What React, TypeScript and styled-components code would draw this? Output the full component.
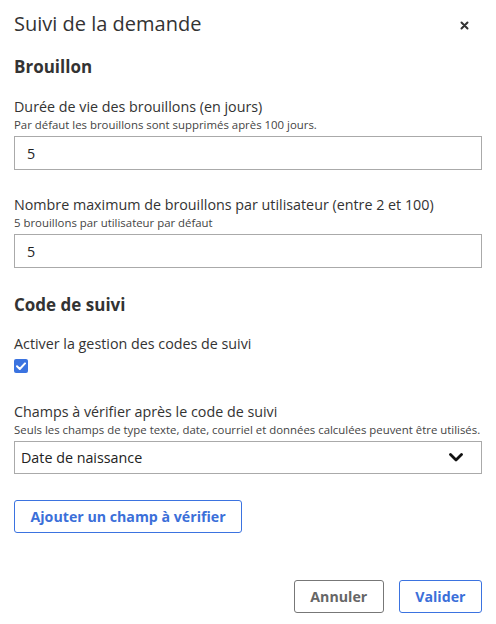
import styled, { createGlobalStyle } from "styled-components";

const GlobalStyle = createGlobalStyle`
  html, body {
    margin: 0;
    padding: 0;
    background: #ffffff;
  }
  body {
    font-family: "Open Sans", "Liberation Sans", sans-serif;
    color: #333333;
  }
  * {
    box-sizing: border-box;
  }
`;

const Dialog = styled.div`
  width: 496px;
  padding: 10px 14px 11px;
  display: flex;
  flex-direction: column;
`;

const Header = styled.div`
  display: flex;
  align-items: center;
  justify-content: space-between;
`;

const Title = styled.h2`
  margin: 0;
  font-size: 20px;
  line-height: 28px;
  font-weight: 400;
  color: #333333;
`;

const CloseButton = styled.button`
  border: none;
  background: none;
  padding: 0;
  margin: 2px 12px 0 0;
  width: 12px;
  height: 12px;
  display: flex;
  align-items: center;
  justify-content: center;
  cursor: pointer;
`;

const SectionTitle = styled.h3<{ $spaced?: boolean }>`
  margin: ${(p) => (p.$spaced ? "25px" : "17px")} 0 0;
  font-size: 17px;
  line-height: 24px;
  font-weight: 700;
  color: #333333;
`;

const Field = styled.div<{ $gap?: number }>`
  display: flex;
  flex-direction: column;
  margin-top: ${(p) => p.$gap ?? 25}px;
`;

const Label = styled.label`
  font-size: 14.3px;
  line-height: 20px;
  color: #333333;
`;

const Hint = styled.div`
  font-size: 11.4px;
  line-height: 15px;
  color: #444444;
`;

const TextInput = styled.input`
  width: 100%;
  height: 34px;
  margin-top: 4px;
  padding: 0 12px;
  border: 1px solid #aaaaaa;
  border-radius: 0;
  font-family: inherit;
  font-size: 14.3px;
  color: #222222;
  outline: none;
`;

const CheckboxBox = styled.span`
  margin: 5px 0 4px;
  width: 14px;
  height: 14px;
  border-radius: 2px;
  background: #3b73e0;
  display: flex;
  align-items: center;
  justify-content: center;
`;

const SelectBox = styled.div`
  height: 33px;
  margin-top: 4px;
  border: 1px solid #aaaaaa;
  padding: 0 18px 0 6px;
  display: flex;
  align-items: center;
  justify-content: space-between;
  font-size: 14.3px;
  color: #222222;
`;

const Button = styled.button<{ $tone?: "primary" | "muted" }>`
  height: 33px;
  padding: 0 15.5px;
  background: #ffffff;
  border: 1px solid ${(p) => (p.$tone === "muted" ? "#777777" : "#3b73e0")};
  border-radius: 3px;
  color: ${(p) => (p.$tone === "muted" ? "#666666" : "#3b6fd9")};
  font-family: inherit;
  font-size: 14.2px;
  font-weight: 700;
  cursor: pointer;
`;

const AddRow = styled.div`
  margin-top: 26px;
  display: flex;
`;

const Footer = styled.div`
  margin-top: 47px;
  display: flex;
  justify-content: flex-end;
  gap: 15px;
`;

const Check = () => (
  <svg width="10" height="8" viewBox="0 0 10 8">
    <path d="M1 4.2 L3.8 7 L9 1.4" fill="none" stroke="#fff" strokeWidth="2" strokeLinecap="round" strokeLinejoin="round" />
  </svg>
);

const Chevron = () => (
  <svg width="14" height="9" viewBox="0 0 14 9">
    <path d="M1.5 1.5 L7 7 L12.5 1.5" fill="none" stroke="#111" strokeWidth="2.8" strokeLinecap="round" strokeLinejoin="round" />
  </svg>
);

export default function App() {
  return (
    <>
      <GlobalStyle />
      <Dialog>
        <Header>
          <Title>Suivi de la demande</Title>
          <CloseButton aria-label="Fermer">
            <svg width="9" height="9" viewBox="0 0 9 9">
              <path d="M1.5 1.5 L7.5 7.5 M7.5 1.5 L1.5 7.5" stroke="#333" strokeWidth="2" strokeLinecap="round" />
            </svg>
          </CloseButton>
        </Header>

        <SectionTitle>Brouillon</SectionTitle>

        <Field $gap={18}>
          <Label>Durée de vie des brouillons (en jours)</Label>
          <Hint>Par défaut les brouillons sont supprimés après 100 jours.</Hint>
          <TextInput defaultValue="5" />
        </Field>

        <Field>
          <Label>Nombre maximum de brouillons par utilisateur (entre 2 et 100)</Label>
          <Hint>5 brouillons par utilisateur par défaut</Hint>
          <TextInput defaultValue="5" />
        </Field>

        <SectionTitle $spaced>Code de suivi</SectionTitle>

        <Field $gap={17}>
          <Label>Activer la gestion des codes de suivi</Label>
          <CheckboxBox>
            <Check />
          </CheckboxBox>
        </Field>

        <Field>
          <Label>Champs à vérifier après le code de suivi</Label>
          <Hint>Seuls les champs de type texte, date, courriel et données calculées peuvent être utilisés.</Hint>
          <SelectBox>
            <span>Date de naissance</span>
            <Chevron />
          </SelectBox>
        </Field>

        <AddRow>
          <Button>Ajouter un champ à vérifier</Button>
        </AddRow>

        <Footer>
          <Button $tone="muted">Annuler</Button>
          <Button>Valider</Button>
        </Footer>
      </Dialog>
    </>
  );
}
